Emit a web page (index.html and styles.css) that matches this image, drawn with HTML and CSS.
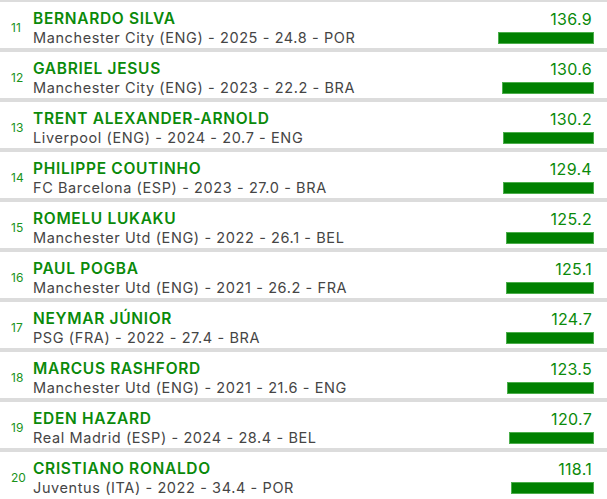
FILE: index.html
```html
<!DOCTYPE html>
<html>
<head>
<meta charset="utf-8">
<link rel="stylesheet" href="styles.css">
</head>
<body>
<div class="list">
  <div class="row"><div class="rank">11</div><div class="info"><div class="name">BERNARDO SILVA</div><div class="meta">Manchester City (ENG) - 2025 - 24.8 - POR</div></div><div class="score"><div class="value">136.9</div><div class="bar" style="width:94px"></div></div></div>
  <div class="row"><div class="rank">12</div><div class="info"><div class="name">GABRIEL JESUS</div><div class="meta">Manchester City (ENG) - 2023 - 22.2 - BRA</div></div><div class="score"><div class="value">130.6</div><div class="bar" style="width:89.7px"></div></div></div>
  <div class="row"><div class="rank">13</div><div class="info"><div class="name">TRENT ALEXANDER-ARNOLD</div><div class="meta">Liverpool (ENG) - 2024 - 20.7 - ENG</div></div><div class="score"><div class="value">130.2</div><div class="bar" style="width:89.4px"></div></div></div>
  <div class="row"><div class="rank">14</div><div class="info"><div class="name">PHILIPPE COUTINHO</div><div class="meta">FC Barcelona (ESP) - 2023 - 27.0 - BRA</div></div><div class="score"><div class="value">129.4</div><div class="bar" style="width:88.8px"></div></div></div>
  <div class="row"><div class="rank">15</div><div class="info"><div class="name">ROMELU LUKAKU</div><div class="meta">Manchester Utd (ENG) - 2022 - 26.1 - BEL</div></div><div class="score"><div class="value">125.2</div><div class="bar" style="width:86px"></div></div></div>
  <div class="row"><div class="rank">16</div><div class="info"><div class="name">PAUL POGBA</div><div class="meta">Manchester Utd (ENG) - 2021 - 26.2 - FRA</div></div><div class="score"><div class="value">125.1</div><div class="bar" style="width:85.9px"></div></div></div>
  <div class="row"><div class="rank">17</div><div class="info"><div class="name">NEYMAR JÚNIOR</div><div class="meta">PSG (FRA) - 2022 - 27.4 - BRA</div></div><div class="score"><div class="value">124.7</div><div class="bar" style="width:85.6px"></div></div></div>
  <div class="row"><div class="rank">18</div><div class="info"><div class="name">MARCUS RASHFORD</div><div class="meta">Manchester Utd (ENG) - 2021 - 21.6 - ENG</div></div><div class="score"><div class="value">123.5</div><div class="bar" style="width:84.8px"></div></div></div>
  <div class="row"><div class="rank">19</div><div class="info"><div class="name">EDEN HAZARD</div><div class="meta">Real Madrid (ESP) - 2024 - 28.4 - BEL</div></div><div class="score"><div class="value">120.7</div><div class="bar" style="width:82.9px"></div></div></div>
  <div class="row"><div class="rank">20</div><div class="info"><div class="name">CRISTIANO RONALDO</div><div class="meta">Juventus (ITA) - 2022 - 34.4 - POR</div></div><div class="score"><div class="value">118.1</div><div class="bar" style="width:81.1px"></div></div></div>
</div>
</body>
</html>
```
FILE: styles.css
```css
html, body {
  margin: 0;
  padding: 0;
  background: #fff;
}
body {
  font-family: Inter, "Noto Sans", sans-serif;
}
.list {
  margin-top: -2px;
}
.row {
  display: flex;
  align-items: flex-start;
  height: 46px;
  border-top: 4px solid #dcdcdc;
}
.rank {
  width: 22px;
  padding-left: 11px;
  padding-top: 19px;
  font-size: 12px;
  line-height: 14px;
  color: #1a931a;
}
.info {
  flex: 1;
  padding-top: 8px;
}
.name {
  font-size: 15.5px;
  line-height: 18px;
  font-weight: 600;
  color: #0a8a0a;
  letter-spacing: 0.68px;
}
.meta {
  font-size: 14.5px;
  line-height: 19px;
  color: #454545;
  letter-spacing: 0.6px;
}
.score {
  display: flex;
  flex-direction: column;
  align-items: flex-end;
  padding-top: 8px;
  padding-right: 13px;
}
.value {
  font-size: 16px;
  line-height: 18px;
  color: #0a8a0a;
  padding-right: 2px;
  letter-spacing: 0.3px;
}
.bar {
  margin-top: 4px;
  height: 10px;
  background: #008000;
  border: 1px solid #4cae4c;
}
```
